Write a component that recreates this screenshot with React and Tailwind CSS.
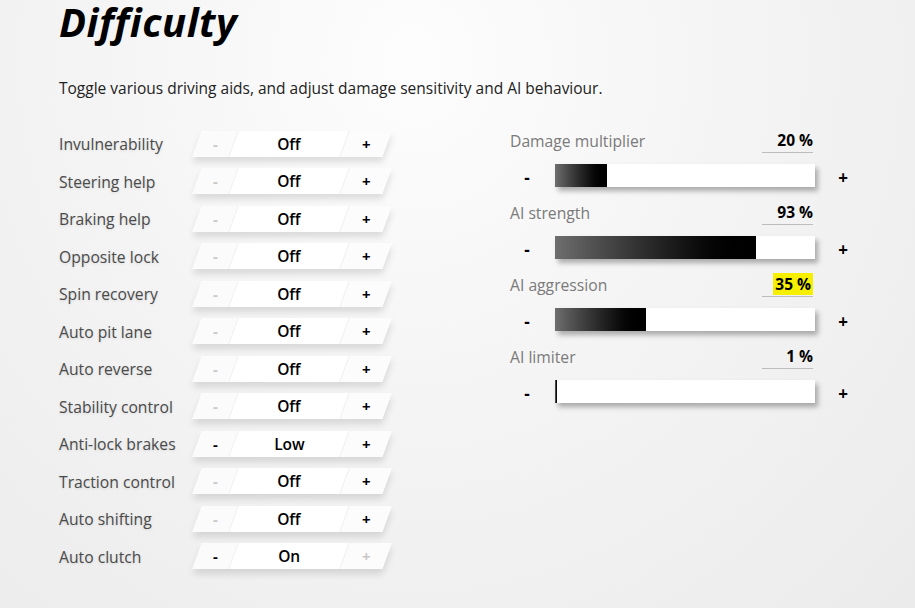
import React from "react";

const toggles = [
  { label: "Invulnerability", value: "Off", minus: false, plus: true },
  { label: "Steering help", value: "Off", minus: false, plus: true },
  { label: "Braking help", value: "Off", minus: false, plus: true },
  { label: "Opposite lock", value: "Off", minus: false, plus: true },
  { label: "Spin recovery", value: "Off", minus: false, plus: true },
  { label: "Auto pit lane", value: "Off", minus: false, plus: true },
  { label: "Auto reverse", value: "Off", minus: false, plus: true },
  { label: "Stability control", value: "Off", minus: false, plus: true },
  { label: "Anti-lock brakes", value: "Low", minus: true, plus: true },
  { label: "Traction control", value: "Off", minus: false, plus: true },
  { label: "Auto shifting", value: "Off", minus: false, plus: true },
  { label: "Auto clutch", value: "On", minus: true, plus: false },
];

const sliders = [
  { label: "Damage multiplier", value: "20 %", fill: 52 },
  { label: "AI strength", value: "93 %", fill: 201 },
  { label: "AI aggression", value: "35 %", fill: 91, highlight: true },
  { label: "AI limiter", value: "1 %", fill: 2 },
];

const ToggleRow = ({ item }) => (
  <div className="flex items-center h-[37.5px]">
    <span className="w-[138px] text-[15.7px] text-[#4a4a4a] [text-shadow:0_1px_3px_rgba(0,0,0,0.12)] pt-[3px] whitespace-nowrap">
      {item.label}
    </span>
    <div className="flex h-[26px] w-[190px] -skew-x-[20deg] bg-white shadow-[2px_5px_7px_rgba(0,0,0,0.12)]">
      <div className="w-[36px] flex items-center justify-center bg-[#fbfbfb]">
        <span className={`skew-x-[20deg] text-[15px] font-bold ${item.minus ? "text-black" : "text-[#c8c8c8]"}`}>-</span>
      </div>
      <div className="w-[111px] flex items-center justify-center border-l border-[#f0f0f0]">
        <span className="skew-x-[20deg] pt-[2px] text-[15.5px] font-semibold text-black">{item.value}</span>
      </div>
      <div className="flex-1 flex items-center justify-center border-l border-[#f0f0f0] bg-[#fcfcfc]">
        <span className={`skew-x-[20deg] text-[15px] font-bold ${item.plus ? "text-black" : "text-[#c8c8c8]"}`}>+</span>
      </div>
    </div>
  </div>
);

const SliderGroup = ({ item }) => (
  <div className="h-[72px]">
    <div className="flex items-end justify-between w-[303px] h-[28px]">
      <span className="text-[15.7px] text-[#7a7a7a] leading-[20px] mb-[5px]">{item.label}</span>
      <div className="w-[51px] border-b border-[#bdbdbd] text-right leading-[20px] pb-[2px] mb-[3px]">
        <span className={`text-[15.5px] font-bold text-black ${item.highlight ? "bg-[#f6f000] px-[2px]" : ""}`}>{item.value}</span>
      </div>
    </div>
    <div className="flex items-center h-[34px] pt-[4px]">
      <span className="w-[34px] pt-[5px] text-center text-[17px] font-bold text-black">-</span>
      <div className="ml-[11px] w-[260px] h-[23px] bg-white shadow-[3px_4px_5px_rgba(0,0,0,0.3)] flex">
        <div
          className="h-full bg-gradient-to-r from-[#6e6e6e] to-black"
          style={{ width: item.fill }}
        />
      </div>
      <span className="w-[56px] pt-[5px] text-center text-[17px] font-bold text-black">+</span>
    </div>
  </div>
);

export default function App() {
  return (
    <div className="w-[915px] h-[608px] overflow-hidden font-['Open_Sans',sans-serif] bg-[radial-gradient(ellipse_at_45%_10%,#fdfdfd_0%,#f4f4f4_45%,#ebebeb_100%)]">
      <div className="pl-[59px] pt-[2px]">
        <h1 className="text-[40px] leading-[40px] tracking-[0.5px] font-bold italic text-black">Difficulty</h1>
        <p className="mt-[36px] text-[15.5px] leading-[20px] text-[#222]">
          Toggle various driving aids, and adjust damage sensitivity and AI behaviour.
        </p>
        <div className="flex mt-[27px]">
          <div className="w-[451px]">
            {toggles.map((t) => (
              <ToggleRow key={t.label} item={t} />
            ))}
          </div>
          <div className="mt-[3px]">
            {sliders.map((s) => (
              <SliderGroup key={s.label} item={s} />
            ))}
          </div>
        </div>
      </div>
    </div>
  );
}
